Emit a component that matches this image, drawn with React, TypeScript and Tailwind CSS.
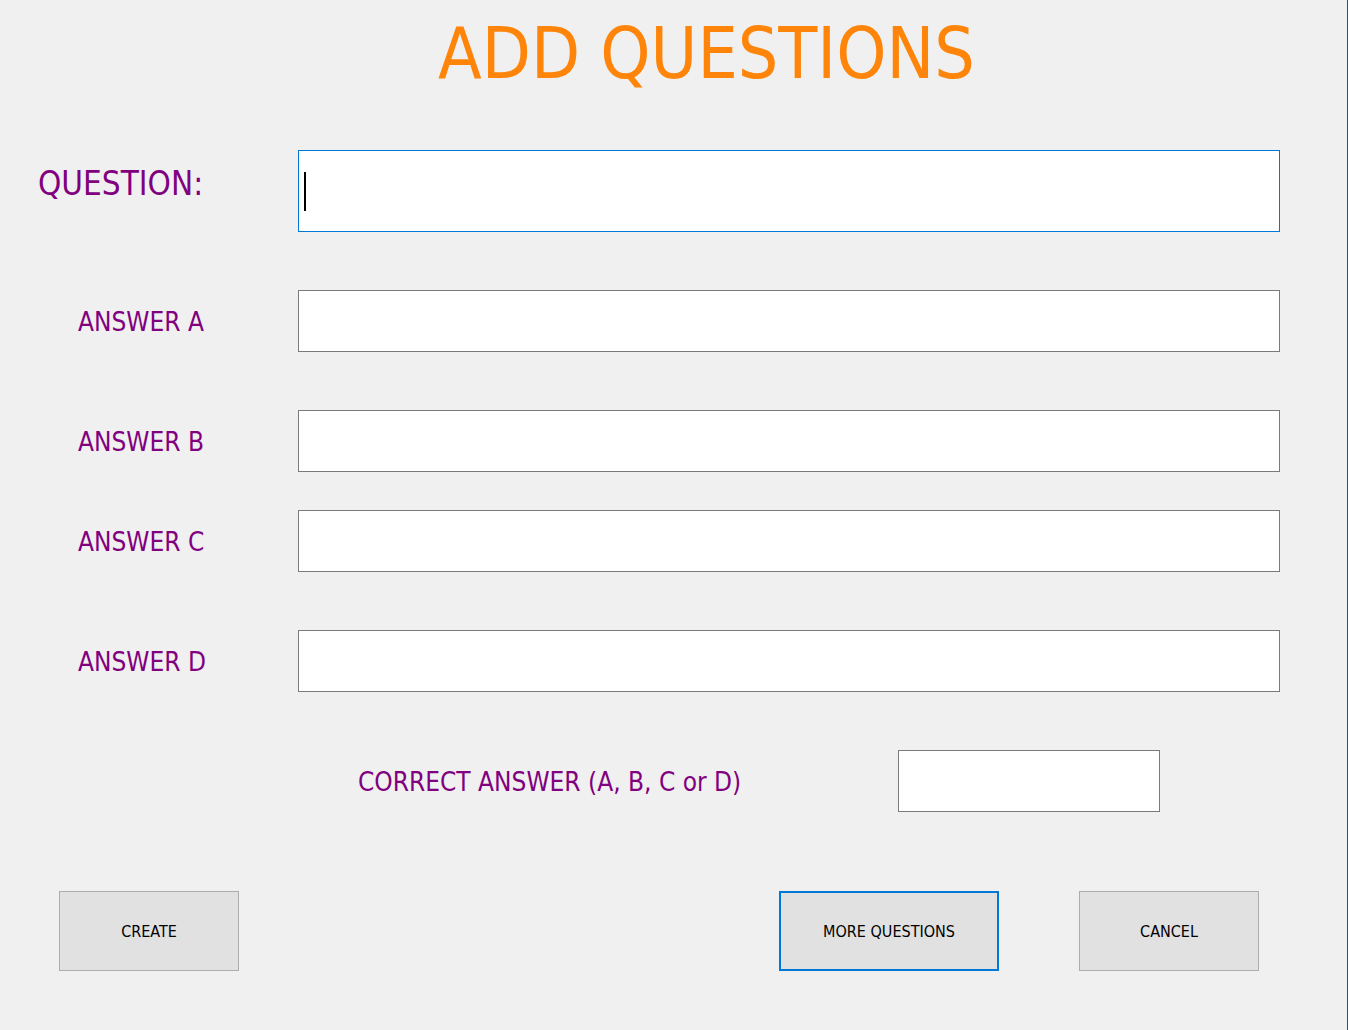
import React from "react";

const font = "font-['DejaVu_Sans_Condensed','DejaVu_Sans',sans-serif]";

function AnswerRow({ label, mt }: { label: string; mt: string }) {
  return (
    <div className={`flex items-center h-[62px] ${mt}`}>
      <div className="w-[298px] pl-[78px] pt-[2px] text-[26px] leading-none text-[#800080]">{label}</div>
      <input
        readOnly
        className="w-[982px] h-[62px] bg-white border border-[#7a7a7a] outline-none"
      />
    </div>
  );
}

export default function App() {
  return (
    <div className={`w-[1348px] h-[1030px] bg-[#f0f0f0] border-r border-[#34526e] ${font}`}>
      <h1 className="h-[150px] pt-[18px] pl-[438px] text-[71px] leading-none font-normal text-[#ff850a]">
        ADD QUESTIONS
      </h1>

      <div className="flex h-[82px]">
        <div className="w-[298px] pl-[38px] pt-[17px] text-[33px] leading-none text-[#800080]">QUESTION:</div>
        <div className="relative w-[982px] h-[82px]">
          <input
            readOnly
            className="w-full h-full bg-white border border-[#0078d7] outline-none"
          />
          <div className="absolute left-[6px] top-[22px] w-[2px] h-[39px] bg-black" />
        </div>
      </div>

      <AnswerRow label="ANSWER A" mt="mt-[58px]" />
      <AnswerRow label="ANSWER B" mt="mt-[58px]" />
      <AnswerRow label="ANSWER C" mt="mt-[38px]" />
      <AnswerRow label="ANSWER D" mt="mt-[58px]" />

      <div className="flex items-center h-[62px] mt-[58px]">
        <div className="w-[898px] pl-[358px] pt-[2px] text-[26px] leading-none text-[#800080]">
          CORRECT ANSWER (A, B, C or D)
        </div>
        <input
          readOnly
          className="w-[262px] h-[62px] bg-white border border-[#7a7a7a] outline-none"
        />
      </div>

      <div className="flex h-[80px] mt-[79px] pl-[59px]">
        <button className="w-[180px] h-[80px] pt-[1px] bg-[#e1e1e1] border border-[#adadad] text-[16px] text-black">
          CREATE
        </button>
        <button className="ml-[540px] w-[220px] h-[80px] pt-[1px] bg-[#e1e1e1] border-2 border-[#0078d7] text-[16px] text-black">
          MORE QUESTIONS
        </button>
        <button className="ml-[80px] w-[180px] h-[80px] pt-[1px] bg-[#e1e1e1] border border-[#adadad] text-[16px] text-black">
          CANCEL
        </button>
      </div>
    </div>
  );
}
